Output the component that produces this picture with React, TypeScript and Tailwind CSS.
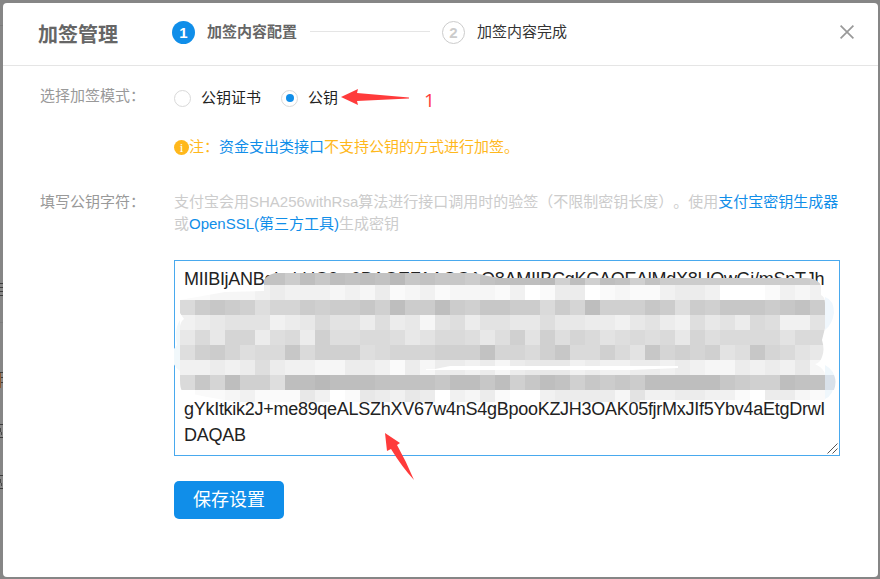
import React from "react";

const KEY_TEXT = [
  "MIIBIjANBgkqhkiG9w0BAQEFAAOCAQ8AMIIBCgKCAQEAlMdX8HOwGj/mSpTJh",
  "",
  "",
  "",
  "",
  "gYkItkik2J+me89qeALSZhXV67w4nS4gBpooKZJH3OAK05fjrMxJIf5Ybv4aEtgDrwI",
  "DAQAB",
].join("\n");

// One hex digit per 15px tile, 0 = darkest grey, f = white.
const MOSAIC = [
  "fffff22413121203233421110515125244444444445",
  "eedddcbcccdcdbedcedddecfebbfedeecbbcfffecdc",
  "7434586645443514414533447461555348453334324",
  "cba999cba799b8bad98b99aa8aabbca9bc8a9b78cc9",
  "a7a66b87b588778a9778a859586798787a687777977",
  "854687737555876665552667537757936565983679a",
  "ccbcb8bccddbbcebdbbcbdbaaacbccbbcbcddbcbcad",
  "7361558110111222231131531253434111113455122",
  "feedceeeacfeabcabfcdbeffcbbbbd9ccbbccefbbde",
];

function grey(digit: string) {
  const v = Math.round(185 + parseInt(digit, 16) * 4.67);
  return `rgb(${v},${v},${v})`;
}

function Mosaic() {
  return (
    <svg className="pointer-events-none absolute left-0 top-0" width="666" height="196" viewBox="174 260 666 196">
      <defs>
        <clipPath id="smear">
          <path d="M264 291 V280 Q267 275 275 273 L475 273 Q486 276 500 278 H806 Q818 278 821 286 V295 Q825 297 825 303 V328 L822 340 Q825 350 822 357 Q820 363 815 364 Q825 369 825 375 V400 H640 V402 H240 Q205 398 182 391 Q180 388 180 380 V326 Q181 321 184 319 L180 313 V300 L225 292 Z" />
        </clipPath>
      </defs>
      <path d="M825 297 Q834 300 834 313 Q832 325 825 330 Z" fill="#f0f7fd" />
      <path d="M825 365 Q836 371 835 382 Q833 396 825 399 Z" fill="#eff7fc" />
      <path d="M825 375 H834 Q837 382 834 390 H825 Z" fill="#d9e1ea" />
      <path d="M180 320 Q174 329 177 345 Q172 350 172 357 Q173 367 180 371 Z" fill="#f1f8fb" />
      <g clipPath="url(#smear)" shapeRendering="crispEdges">
        {MOSAIC.map((row, y) =>
          row.split("").map((d, x) => (
            <rect key={`${x}-${y}`} x={180 + x * 15} y={270 + y * 15} width="15" height="15" fill={grey(d)} />
          ))
        )}
      </g>
      <path d="M426 370 V369 H435 L450 366 H678 V368 L632 370 H444 Z" fill="#fff" />
    </svg>
  );
}

function Step({ n, label, active }: { n: number; label: string; active?: boolean }) {
  return (
    <div className="flex items-center">
      <span
        className={
          active
            ? "flex size-[23px] items-center justify-center rounded-full bg-[#108ee9] text-[15px] font-bold leading-none text-white"
            : "flex size-[23px] items-center justify-center rounded-full border border-[#ccc] text-[15px] font-bold leading-none text-[#ccc]"
        }
      >
        {n}
      </span>
      <span className={active ? "ml-3 font-bold text-[#666]" : "ml-3 text-[#333]"}>{label}</span>
    </div>
  );
}

function Radio({ label, checked }: { label: string; checked?: boolean }) {
  return (
    <label className="flex items-center text-[#222]">
      <span className="mr-2.5 flex size-[17px] items-center justify-center rounded-full border border-[#d9d9d9]">
        {checked && <span className="size-2 rounded-full bg-[#108ee9]" />}
      </span>
      {label}
    </label>
  );
}

export default function App() {
  return (
    <div className="relative h-[579px] w-[880px] overflow-hidden bg-[#868686] pl-[3px] pt-[3px] font-['Liberation_Sans','Noto_Sans_CJK_SC',sans-serif] text-[15px] leading-[22px] [text-spacing-trim:space-all]">
      <svg className="absolute left-0 top-0" width="3" height="579" shapeRendering="crispEdges">
        <path d="M0 25.5H3M0 322.5H3" stroke="#7c7c7c" />
        <path d="M0 283.5H3M0 287.5H3M0 291.5H3M0 295.5H3M0 372.5H3M0 377.5H3M0 382.5H3M0 424.5H3M0 437.5H3M0 475.5H3M0 488.5H3" stroke="#3c3c3c" />
        <path d="M0 373H1V388H0Z" fill="#8c5a35" />
        <path d="M0 428L2 435M0 479L2 486" stroke="#4a4a4a" />
      </svg>

      <div className="flex h-[574px] w-[875px] flex-col rounded-[4px] bg-white">
        <header className="flex h-[63px] shrink-0 items-center border-b border-[#e5e5e5] pb-1 pl-[35px] pr-6">
          <h1 className="mt-1.5 w-[134px] text-[20px] font-bold text-[#666]">加签管理</h1>
          <Step n={1} label="加签内容配置" active />
          <span className="mb-px ml-[13px] mr-3 h-px w-[120px] bg-[#e5e5e5]" />
          <Step n={2} label="加签内容完成" />
          <svg className="mb-px ml-auto" width="14" height="14" viewBox="0 0 14 14" stroke="#999" strokeWidth="1.7">
            <path d="M.6.6 13.4 13.4M13.4.6.6 13.4" />
          </svg>
        </header>

        <div className="flex pl-[37px] pt-[19px]">
          <div className="w-[134px] shrink-0 text-[#999]">选择加签模式：</div>
          <div>
            <div className="mt-0.5 flex h-[22px] items-center">
              <Radio label="公钥证书" />
              <div className="w-5" />
              <Radio label="公钥" checked />
              <svg className="ml-[3px]" width="68" height="18" viewBox="0 0 68 18" fill="#ff3b3b">
                <path d="M0 8 17 0 16 4 68 8.5V9.5L16 12 17 16Z" />
              </svg>
              <span className="ml-[15px] mt-1 font-['Open_Sans',sans-serif] text-[19px] text-[#ff3b3b]">1</span>
            </div>
            <div className="mt-[27px] flex items-center text-[#ffb81c]">
              <span className="flex size-[15px] items-center justify-center rounded-full bg-[#ffb81c] font-['Liberation_Serif',serif] text-[13px] leading-none text-white">i</span>
              注：<a className="text-[#108ee9]">资金支出类接口</a>不支持公钥的方式进行加签。
            </div>
          </div>
        </div>

        <div className="flex pl-[37px] pt-[33px]">
          <div className="w-[134px] shrink-0 text-[#999]">填写公钥字符：</div>
          <div className="w-[666px]">
            <p className="whitespace-nowrap text-[#ccc]">
              支付宝会用SHA256withRsa算法进行接口调用时的验签（不限制密钥长度）。使用
              <a className="text-[#108ee9]">支付宝密钥生成器</a>
              <br />或<a className="text-[#108ee9]">OpenSSL(第三方工具)</a>生成密钥
            </p>
            <div className="relative mt-[25px] h-[196px]">
              <textarea
                readOnly
                defaultValue={KEY_TEXT}
                className="block h-[196px] w-[666px] resize-none overflow-hidden whitespace-pre border border-[#49a9ee] px-[9px] py-[5px] text-[18px] leading-[26px] tracking-[-0.28px] text-[#222] outline-none"
              />
              <Mosaic />
              <svg className="pointer-events-none absolute bottom-[2px] right-[2px]" width="11" height="11" viewBox="0 0 11 11" stroke="#555">
                <path d="M.5 10.5 10.5 .5M5.5 10.5 10.5 5.5" />
              </svg>
              <svg className="pointer-events-none absolute left-[210px] top-[172px]" width="32" height="50" viewBox="384 432 32 50" fill="#ff3b3b">
                <path d="M385 433 400 443 397 445 Q406 461 414 480 Q402 467 391 449L387 451Z" />
              </svg>
            </div>
            <button className="mt-[25px] block h-[38px] w-[110px] rounded-[5px] bg-[#108ee9] text-[18px] text-white">保存设置</button>
          </div>
        </div>
      </div>
    </div>
  );
}
